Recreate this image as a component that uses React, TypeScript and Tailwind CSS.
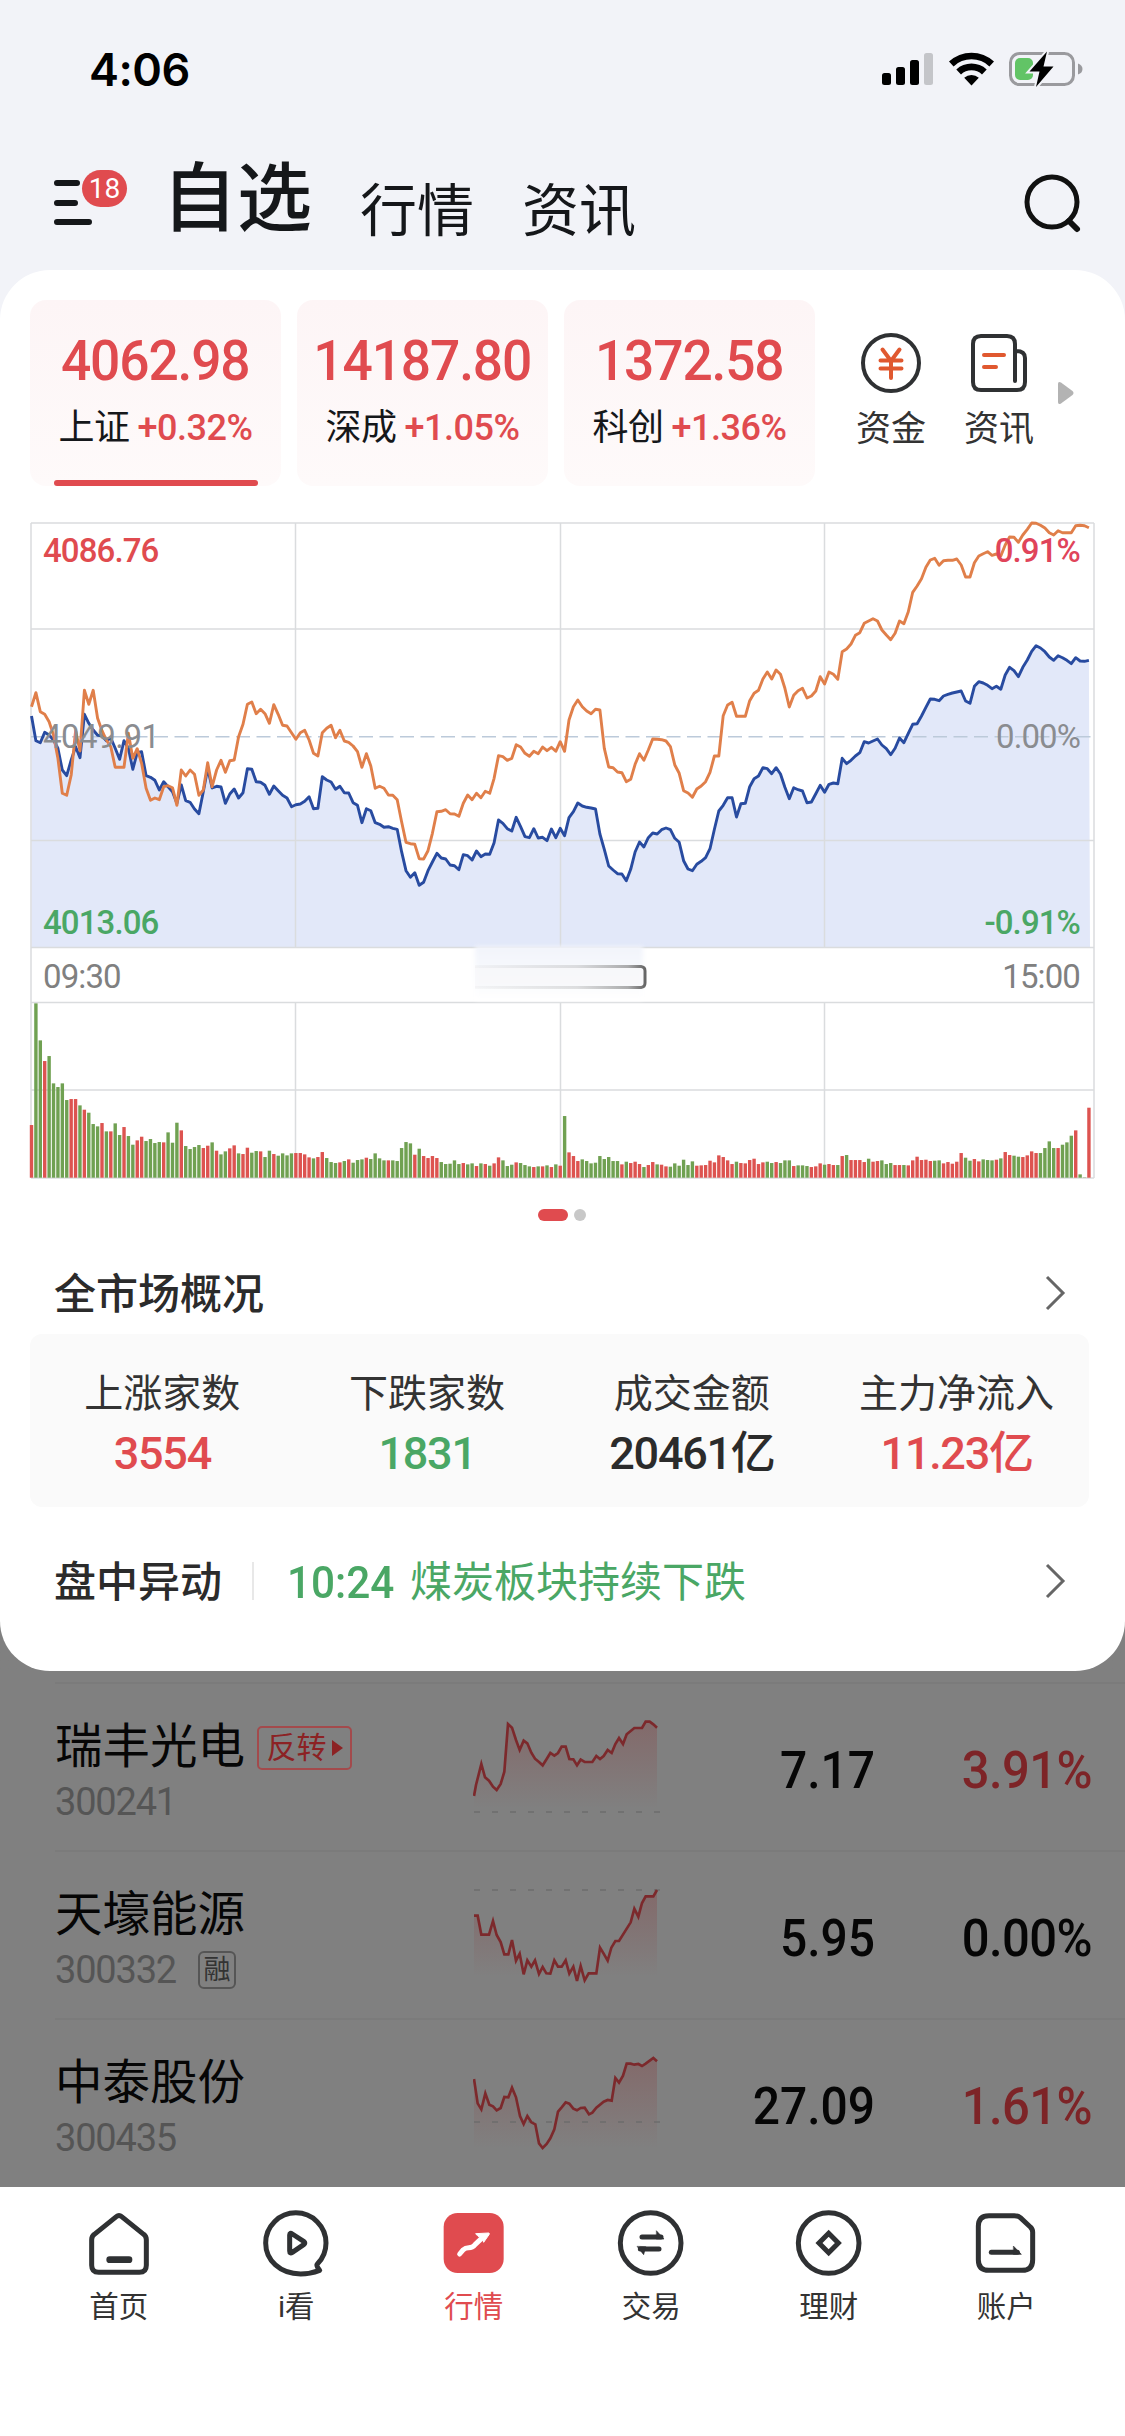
import React from "react";

const RED = "#e04b4f";

const indices = [
  { value: "4062.98", name: "上证", change: "+0.32%", active: true },
  { value: "14187.80", name: "深成", change: "+1.05%", active: false },
  { value: "1372.58", name: "科创", change: "+1.36%", active: false },
];

const overview = [
  { label: "上涨家数", value: "3554", color: "text-[#e04b4f]" },
  { label: "下跌家数", value: "1831", color: "text-[#4aa765]" },
  { label: "成交金额", value: "20461亿", color: "text-[#2b2b2b]" },
  { label: "主力净流入", value: "11.23亿", color: "text-[#e04b4f]" },
];

// one value per trading minute, 09:30 - 15:00
const leading = [
  618, 692, 698, 667, 675, 690, 715, 780, 797, 750, 710, 743, 613, 640, 660, 676, 677, 692, 684, 715,
  748, 692, 715, 778, 728, 725, 797, 802, 811, 840, 815, 830, 845, 880, 825, 872, 877, 897, 911, 845,
  775, 834, 829, 831, 880, 852, 837, 864, 848, 776, 778, 815, 817, 826, 853, 828, 842, 856, 864, 890,
  884, 882, 874, 860, 896, 895, 800, 810, 816, 838, 829, 848, 849, 878, 886, 938, 896, 902, 938, 943,
  952, 950, 955, 958, 1025, 1082, 1102, 1088, 1126, 1117, 1082, 1056, 1030, 1044, 1047, 1065, 1067, 1079, 1034, 1037,
  1050, 1023, 1040, 1032, 1033, 998, 930, 940, 956, 963, 922, 950, 980, 983, 956, 984, 982, 992, 957, 983,
  955, 977, 923, 905, 879, 888, 892, 894, 897, 972, 1018, 1068, 1080, 1091, 1092, 1112, 1078, 1026, 996, 1011,
  983, 969, 972, 959, 954, 959, 985, 997, 1052, 1077, 1082, 1063, 1054, 1043, 1016, 958, 903, 886, 863, 863,
  921, 881, 880, 830, 806, 798, 773, 776, 791, 773, 792, 832, 866, 833, 839, 843, 878, 876, 851, 826,
  847, 823, 819, 821, 745, 761, 751, 738, 728, 695, 699, 693, 687, 705, 716, 734, 715, 684, 698, 670,
  643, 641, 618, 592, 567, 568, 572, 558, 553, 549, 546, 543, 573, 580, 529, 515, 519, 526, 536, 529,
  538, 495, 472, 482, 500, 472, 450, 424, 407, 414, 425, 441, 451, 437, 443, 451, 461, 443, 453, 454,
  451,
];

const average = [
  590, 548, 605, 613, 635, 675, 745, 850, 856, 795, 662, 723, 541, 583, 541, 625, 662, 690, 710, 772,
  772, 772, 670, 745, 716, 760, 835, 871, 864, 869, 830, 827, 833, 886, 780, 798, 780, 793, 856, 840,
  758, 830, 780, 751, 787, 752, 750, 680, 643, 583, 576, 611, 598, 611, 640, 584, 613, 646, 648, 668,
  688, 668, 661, 690, 730, 738, 668, 655, 646, 683, 661, 693, 697, 708, 725, 772, 731, 768, 835, 829,
  835, 855, 856, 869, 935, 997, 1001, 1003, 1046, 1047, 1022, 970, 905, 904, 899, 911, 912, 919, 880, 855,
  869, 850, 863, 844, 850, 805, 737, 740, 751, 745, 704, 711, 730, 739, 724, 731, 711, 722, 712, 724,
  695, 724, 630, 590, 570, 590, 603, 611, 598, 600, 715, 771, 773, 786, 788, 815, 808, 763, 731, 751,
  720, 687, 688, 689, 693, 710, 765, 790, 842, 849, 862, 837, 828, 815, 787, 738, 738, 617, 585, 577,
  619, 619, 619, 572, 550, 541, 507, 486, 507, 480, 493, 535, 591, 556, 542, 535, 564, 558, 543, 500,
  522, 486, 493, 508, 425, 417, 402, 376, 368, 340, 333, 326, 333, 360, 375, 389, 370, 333, 341, 305,
  247, 228, 206, 172, 150, 145, 166, 152, 151, 151, 147, 165, 201, 201, 158, 138, 131, 125, 136, 132,
  138, 105, 81, 82, 97, 75, 58, 39, 40, 46, 54, 68, 75, 62, 68, 68, 68, 47, 46, 47,
  53,
];

// r = 涨, g = 跌, number is the top of the bar
const volume = `
r435 g70 g181 r243 g228 g310 g321 g310 g360 r357 r357 g376 r389 g398 g432 g439 r429 g454 r454 g430
g465 r441 g468 g494 r481 r470 g483 g477 g489 g486 r487 g457 g488 g428 r451 g498 g507 g501 g495 r504
r497 g487 r512 g523 g514 r505 r496 g520 r522 r503 g518 g513 r514 g531 g512 r522 g527 g520 g526 g520
r519 r519 r523 r532 g535 r531 r516 g534 g546 g549 r547 g543 r538 g548 g540 g538 r533 g537 g520 g535
g541 r541 g541 g543 g504 g486 g490 r524 g506 r528 r534 r528 r534 g546 g552 g551 g541 g552 r549 g553
g550 r558 g550 r552 g557 r550 r532 g541 g558 g554 r547 g549 g555 g559 r561 g559 r559 g556 r561 g553
r557 g408 r517 r528 r543 g538 g543 g550 g548 g528 g537 g531 g543 g543 r553 g545 r549 r545 r552 g561
r555 r546 g553 r554 r559 g560 g550 g557 g539 g555 g544 r557 r556 r555 r542 r547 r526 r531 r541 r552
g545 r549 r550 r540 r536 r552 r547 g545 g549 r546 g549 g541 g541 r558 g556 g556 g558 r561 r559 r550
g554 r552 r555 g555 r528 g525 r540 r540 r540 r546 g536 r545 r543 g541 g552 g549 r555 r555 g555 r556
r541 r530 r540 r539 r543 g542 g541 r550 r546 r551 r545 r519 g533 g542 r537 r544 g538 g540 g541 r539
g535 r516 r525 g527 g530 r531 r526 r514 r519 g519 g504 g484 g504 r504 g494 g487 g467 r451 g583 g592
r383`
  .trim()
  .split(/\s+/);

const px = (i: number) => 3.5 + i * 4.406;
const toPoints = (data: number[]) =>
  data.map((v, i) => `${px(i).toFixed(1)},${(v / 3 - 10).toFixed(1)}`).join(" ");

const stocks = [
  {
    name: "瑞丰光电",
    code: "300241",
    tag: "反转",
    margin: false,
    price: "7.17",
    change: "3.91%",
    up: true,
    top: -24,
    base: 366,
    fade: [95, 355],
    line: "102,318 108,285 124,222 135,262 147,272 159,290 170,300 182,282 193,245 204,102 216,113 228,150 239,180 251,152 262,160 274,188 285,206 297,216 308,226 320,207 331,189 343,197 354,189 365,170 377,170 388,207 400,208 411,226 422,209 434,216 457,216 469,198 480,207 491,198 503,180 515,189 526,162 537,144 549,162 560,133 583,114 606,114 617,95 629,95 640,103 651,113",
  },
  {
    name: "天壕能源",
    code: "300332",
    tag: "",
    margin: true,
    price: "5.95",
    change: "0.00%",
    up: false,
    top: 480,
    base: 600,
    fade: [600, 860],
    line: "102,677 113,677 124,734 147,734 159,693 170,735 182,756 193,793 205,793 216,750 228,812 239,791 251,853 262,811 274,830 285,811 297,852 308,831 319,850 331,851 343,811 354,830 365,830 377,811 388,851 400,830 411,873 422,828 434,871 446,850 469,850 480,773 491,791 503,812 514,773 526,753 537,753 572,697 583,656 595,680 606,639 617,619 640,619 651,600",
  },
  {
    name: "中泰股份",
    code: "300435",
    tag: "",
    margin: false,
    price: "27.09",
    change: "1.61%",
    up: true,
    top: 984,
    base: 1296,
    fade: [1104, 1375],
    line: "102,1167 113,1240 124,1258 136,1210 148,1244 159,1249 170,1261 182,1254 193,1221 205,1222 216,1193 228,1222 240,1278 251,1302 262,1278 274,1297 286,1303 297,1360 308,1374 320,1362 331,1345 343,1318 354,1265 365,1252 377,1237 388,1241 400,1256 411,1261 422,1254 434,1253 447,1273 457,1268 469,1253 491,1235 503,1230 515,1232 526,1164 537,1178 549,1157 560,1121 572,1121 583,1124 595,1122 606,1128 617,1121 640,1104 651,1114",
  },
];

function StatusBar() {
  return (
    <div className="flex h-[138px] items-center justify-between pl-[89px] pr-[42px]">
      <span className="font-['Inter'] text-[45px] font-semibold leading-none tracking-[-0.5px] text-black">
        4:06
      </span>
      <svg width="202" height="38" viewBox="0 0 202 38">
        <rect x="1" y="23" width="9" height="12" rx="2.5" fill="#000" />
        <rect x="15" y="17" width="9" height="18" rx="2.5" fill="#000" />
        <rect x="29" y="10" width="9" height="25" rx="2.5" fill="#000" />
        <rect x="43" y="3" width="9" height="32" rx="2.5" fill="#c4c5c9" />
        <path d="M68 11.500a33 33 0 0 1 45 0l-4.600 4.900a26 26 0 0 0-35.800 0z" />
        <path d="M75.300 19.500a22.500 22.500 0 0 1 30.400 0l-4.700 4.900a15.500 15.500 0 0 0-21 0z" />
        <path d="M83.200 27.800a11 11 0 0 1 14.600 0L90.500 35.500z" />
        <rect x="129.500" y="3.500" width="63" height="31" rx="9" fill="none" stroke="#9a9a9e" strokeWidth="3" />
        <path d="M197 13.500q4.500 1.500 4.500 5.500t-4.500 5.500z" fill="#9a9a9e" />
        <rect x="134" y="8" width="18" height="22" rx="5" fill="#62c466" />
        <path
          d="M166 1.500l-17.500 20h10L155 37l17.500-20.500h-10z"
          fill="#000"
          stroke="#f2f3f8"
          strokeWidth="4"
          paintOrder="stroke"
        />
      </svg>
    </div>
  );
}

function Header() {
  return (
    <div className="flex h-[132px] items-center pl-[53px] pr-[43px]">
      <div className="relative h-[52px] w-[76px]">
        <svg width="42" height="52" viewBox="0 0 42 52" stroke="#15171a" strokeWidth="6" strokeLinecap="round">
          <path d="M4 5h20M4 25h18M4 44h32" />
        </svg>
        <span className="absolute -top-[8px] left-[29px] flex h-[37px] w-[45px] items-center justify-center rounded-full bg-[#e04b4f] text-[28px] leading-none text-white">
          18
        </span>
      </div>
      <div className="ml-[33px] flex leading-none text-[#15171a]">
        <span className="mb-[9px] text-[75px] font-medium">自选</span>
        <span className="ml-[48px] mt-[21px] text-[57px]">行情</span>
        <span className="ml-[48px] mt-[21px] text-[57px]">资讯</span>
      </div>
      <svg className="ml-auto" width="60" height="60" viewBox="0 0 60 60" fill="none" stroke="#111">
        <circle cx="30" cy="28" r="25" strokeWidth="5" />
        <path d="M47 47l8 8" strokeWidth="6" strokeLinecap="round" />
      </svg>
    </div>
  );
}

function IndexCards() {
  return (
    <div className="flex h-[186px] gap-[16px] pl-[30px]">
      {indices.map((item) => (
        <div
          key={item.name}
          className="relative flex w-[251px] flex-col items-center rounded-2xl bg-linear-to-b from-[#fdf5f6] to-[#fefafa] pt-[34px] leading-none"
        >
          <span className="scale-x-[0.97] text-[55px] font-medium tracking-[-1.2px] text-[#e04b4f]">
            {item.value}
          </span>
          <span className="mt-[21px] flex items-center gap-[8px] text-[36px] tracking-[-0.5px] text-[#15171a]">
            {item.name}
            <span className="font-medium text-[#e04b4f]">{item.change}</span>
          </span>
          {item.active && <span className="absolute bottom-0 h-[6px] w-[204px] rounded-full bg-[#e04b4f]" />}
        </div>
      ))}
      <div className="ml-[21px] flex w-[78px] flex-col items-center pt-[32px] text-[35px] leading-none text-[#333]">
        <svg width="62" height="62" viewBox="0 0 62 62" fill="none" strokeLinecap="round">
          <circle cx="31" cy="31" r="28" stroke="#2f3133" strokeWidth="4" />
          <path
            d="M22.500 17.500L31 29l8.500-11.500M31 29v17M20.500 28.500h21M20.500 36.500h21"
            stroke="#e0582f"
            strokeWidth="4"
          />
        </svg>
        <span className="mt-[18px]">资金</span>
      </div>
      <div className="ml-[14px] flex w-[78px] flex-col items-center pt-[32px] text-[35px] leading-none text-[#333]">
        <svg width="62" height="62" viewBox="0 0 62 62" fill="none" strokeLinecap="round">
          <path
            d="M47 49V12q0-8-8-8H13Q5 4 5 12v38q0 8 8 8h36q8 0 8-8V26q0-7-9-7"
            stroke="#2f3133"
            strokeWidth="4"
          />
          <path d="M16 23h20M16 35h12" stroke="#e0582f" strokeWidth="4" />
        </svg>
        <span className="mt-[18px]">资讯</span>
      </div>
      <svg className="ml-[4px] mt-[81px]" width="17" height="24" viewBox="0 0 17 24">
        <path d="M0 3Q0 0 3 1.500L14.500 10q2 2 0 4L3 22.500Q0 24 0 21z" fill="#b3b3b3" />
      </svg>
    </div>
  );
}

function MinuteChart() {
  const linePoints = toPoints(leading);

  return (
    <div className="relative ml-[28px] mt-[34px] h-[662px] w-[1070px] text-[33px] leading-none tracking-[-0.9px]">
      <svg width="1070" height="662" viewBox="0 0 1070 662" fill="none">
        <polygon points={`3.5,427 ${linePoints} 1062,427`} fill="#e2e8f9" />
        <path
          d="M3 3H1066M3 109H1066M3 320.500H1066M3 427.500H1066M3 482.500H1066M3 570H1066M3 658H1066M3 3V658M1066 3V658M267.500 3V427M532.500 3V427M796.500 3V427M267.500 482.500V658M532.500 482.500V658M796.500 482.500V658"
          stroke="#dadcde"
          strokeWidth="1.500"
        />
        <path d="M3 216.700H1066" stroke="#bccada" strokeWidth="1.500" strokeDasharray="14 6.500" />
        {volume.map((bar, i) => {
          const h = (593 - Number(bar.slice(1))) / 3;
          return (
            <rect
              key={i}
              x={px(i) - 1.7}
              y={657.7 - h}
              width="3.4"
              height={h}
              fill={bar[0] === "r" ? "#dd5350" : "#70a152"}
            />
          );
        })}
        <polyline points={linePoints} stroke="#284ba0" strokeWidth="2.9" strokeLinejoin="round" />
        <polyline points={toPoints(average)} stroke="#e07f4a" strokeWidth="2.9" strokeLinejoin="round" />
      </svg>

      {/* 拖动提示条 */}
      <div className="absolute left-[447px] top-[426px] h-[54px] w-[168px] bg-linear-to-b from-[#f1f4fb] to-white blur-[2px]" />
      <svg className="absolute left-[447px] top-[443px]" width="174" height="28" viewBox="0 0 174 28">
        <defs>
          <linearGradient id="pillFade" x1="0" x2="1" y1="0" y2="0">
            <stop offset="0" stopColor="#888" stopOpacity="0.05" />
            <stop offset="0.6" stopColor="#888" stopOpacity="0.25" />
            <stop offset="0.9" stopColor="#777" stopOpacity="0.6" />
            <stop offset="1" stopColor="#666" stopOpacity="1" />
          </linearGradient>
        </defs>
        <path
          d="M0 3.500H166Q170 4 170 8V20Q170 24 166 24.500H0"
          fill="#f6f7f9"
          fillOpacity="0.6"
          stroke="url(#pillFade)"
          strokeWidth="3"
        />
      </svg>

      <span className="absolute left-[15px] top-[14px] font-medium text-[#e04b4f]">4086.76</span>
      <span className="absolute right-[18px] top-[14px] font-medium text-[#e0445a]">0.91%</span>
      <span className="absolute left-[15px] top-[200px] tracking-[-0.5px] text-[#8a8c90]">4049.91</span>
      <span className="absolute right-[18px] top-[200px] text-[#8a8c90]">0.00%</span>
      <span className="absolute left-[15px] top-[386px] font-medium text-[#4aa765]">4013.06</span>
      <span className="absolute right-[18px] top-[386px] font-medium text-[#4aa765]">-0.91%</span>
      <span className="absolute left-[15px] top-[440px] text-[#808080]">09:30</span>
      <span className="absolute right-[18px] top-[440px] text-[#808080]">15:00</span>
    </div>
  );
}

function Chevron() {
  return (
    <svg className="ml-auto" width="22" height="38" viewBox="0 0 22 38" fill="none">
      <path d="M3 3l16 16L3 35" stroke="#666" strokeWidth="3" />
    </svg>
  );
}

function MarketSheet() {
  return (
    <div className="bg-linear-to-b from-[#f2f3f8] from-50% to-[#808080] to-50%">
      <div className="h-[1401px] rounded-[50px] bg-white pt-[30px]">
        <IndexCards />
        <MinuteChart />

        <div className="mt-[27px] flex h-[12px] justify-center gap-[6px] pr-[1px]">
          <span className="w-[30px] rounded-full bg-[#e04b4f]" />
          <span className="w-[12px] rounded-full bg-[#c8c8c8]" />
        </div>

        <div className="mt-[31px] flex h-[82px] items-center pl-[54px] pr-[59px] text-[42px] font-medium leading-none text-[#2b2b2b]">
          <span className="pt-[3px]">全市场概况</span>
          <Chevron />
        </div>

        <div className="ml-[30px] grid h-[173px] w-[1059px] grid-cols-4 rounded-xl bg-[#fafafa]">
          {overview.map((item) => (
            <div key={item.label} className="flex flex-col items-center pt-[41px] leading-none">
              <span className="text-[39px] text-[#333]">{item.label}</span>
              <span className={`mt-[17px] text-[45px] font-medium tracking-[-1.3px] ${item.color}`}>{item.value}</span>
            </div>
          ))}
        </div>

        <div className="flex h-[148px] items-center pl-[54px] pr-[59px] text-[42px] leading-none">
          <span className="pt-[3px] font-medium text-[#2b2b2b]">盘中异动</span>
          <span className="ml-[30px] h-[38px] w-[2px] bg-[#e8e8e8]" />
          <span className="ml-[33px] w-[109px] origin-left scale-x-[0.94] pt-[3px] text-[45px] font-medium text-[#4aa765]">
            10:24
          </span>
          <span className="ml-[14px] pt-[3px] text-[#4aa765]">煤炭板块持续下跌</span>
          <Chevron />
        </div>
      </div>
    </div>
  );
}

function StockList() {
  return (
    <div className="h-[516px] bg-[#808080] pt-[11px]">
      {stocks.map((s) => (
        <div
          key={s.code}
          className="ml-[55px] grid h-[168px] grid-cols-[418px_190px_212px_217px] border-t-2 border-[#7b7b7b] leading-none"
        >
          <div className="pt-[39px]">
            <div className="flex h-[50px] items-center text-[47.500px] text-[#060606]">
              {s.name}
              {s.tag && (
                <span className="ml-[12px] flex h-[44px] w-[95px] items-center justify-center gap-[5px] rounded-[5px] border-2 border-[#a34a4c] text-[30px] text-[#8c2224]">
                  {s.tag}
                  <svg width="11" height="16" viewBox="0 0 11 16">
                    <path d="M0 0l11 8-11 8z" fill="#8c2224" />
                  </svg>
                </span>
              )}
            </div>
            <div className="mt-[9px] flex h-[40px] items-center text-[38px] tracking-[-1.2px] text-[#555]">
              {s.code}
              {s.margin && (
                <span className="ml-[22px] flex h-[38px] w-[38px] items-center justify-center rounded-[6px] border-2 border-[#555] text-[27px] tracking-normal text-[#333]">
                  融
                </span>
              )}
            </div>
          </div>
          <svg className="-mt-[2px]" width="190" height="168" viewBox={`99 ${s.top} 570 504`} fill="none">
            <defs>
              <linearGradient id={s.code} gradientUnits="userSpaceOnUse" x1="0" x2="0" y1={s.fade[0]} y2={s.fade[1]}>
                <stop offset="0" stopColor="#8c2224" stopOpacity="0.24" />
                <stop offset="1" stopColor="#8c2224" stopOpacity="0" />
              </linearGradient>
            </defs>
            <polygon points={`102,${s.fade[1]} ${s.line} 651,${s.fade[1]}`} fill={`url(#${s.code})`} />
            <path d={`M102 ${s.base}H662`} stroke="#6c6c6c" strokeWidth="5" strokeDasharray="18 36" />
            <polyline points={s.line} stroke="#7c292c" strokeWidth="8" />
          </svg>
          <span className="origin-right scale-x-[0.94] self-center pt-[6px] text-right text-[51px] font-medium text-[#060606]">
            {s.price}
          </span>
          <span
            className={`origin-right scale-x-[0.96] self-center pt-[6px] text-right text-[51px] font-medium tracking-[-0.6px] ${s.up ? "text-[#7d2427]" : "text-[#060606]"}`}
          >
            {s.change}
          </span>
        </div>
      ))}
    </div>
  );
}

const tabs = [
  {
    label: "首页",
    icon: (
      <>
        <path d="M100 29Q108 22 116 29L182 82Q190 88 190 98V175Q190 196 169 196H47Q26 196 26 175V98Q26 88 34 82Z" />
        <path d="M80 158H138" strokeWidth="20" />
      </>
    ),
  },
  {
    label: "i看",
    icon: (
      <>
        <path d="M179 190Q150 201 122 201C60 200 17 160 17 108A90.500 90.500 0 0 1 198 108Q198 145 172 171Q167 176 179 190Z" />
        <path d="M89 84Q89 76 97 81L131 103Q138 108 131 113L97 136Q89 141 89 132Z" />
      </>
    ),
  },
  {
    label: "行情",
    active: true,
    icon: (
      <>
        <rect x="17" y="18" width="180" height="180" rx="42" fill={RED} stroke="none" />
        <path d="M65 141L76 128Q82 122 92 122Q104 122 111 113L134 91" stroke="#fff" />
        <path d="M114 80L152 78Q156 79 153 83L137 106L133 92L121 88Z" fill="#fff" stroke="#fff" strokeWidth="3" />
      </>
    ),
  },
  {
    label: "交易",
    icon: (
      <>
        <circle cx="107" cy="108" r="91" />
        <path d="M81 90H138M76 126H132" />
        <path d="M125 72L147 96H125ZM67 119L86 143L92 120Z" fill="#2f3133" strokeWidth="2" />
      </>
    ),
  },
  {
    label: "理财",
    icon: (
      <>
        <circle cx="107" cy="108" r="91" />
        <path d="M107 79L136 108L107 137L78 108Z" strokeLinejoin="miter" />
      </>
    ),
  },
  {
    label: "账户",
    icon: (
      <>
        <path d="M57 26H133Q144 26 151 32L181 60Q188 66 188 76V158Q188 190 156 190H57Q25 190 25 158V58Q25 26 57 26Z" />
        <path d="M64 136H142" />
        <path d="M131 118L154 142H131Z" fill="#2f3133" strokeWidth="2" />
      </>
    ),
  },
];

function TabBar() {
  return (
    <div className="grid h-[249px] grid-cols-6 bg-white px-[30px] pt-[20px]">
      {tabs.map((tab) => (
        <div
          key={tab.label}
          className={`flex flex-col items-center text-[29.500px] leading-none ${tab.active ? "text-[#e04b4f]" : "text-[#333]"}`}
        >
          <svg
            width="72"
            height="72"
            viewBox="0 0 216 216"
            fill="none"
            stroke="#2f3133"
            strokeWidth="15"
            strokeLinecap="round"
            strokeLinejoin="round"
          >
            {tab.icon}
          </svg>
          <span className="mt-[14px]">{tab.label}</span>
        </div>
      ))}
    </div>
  );
}

export default function App() {
  return (
    <main className="w-[1125px] overflow-hidden bg-white font-['Roboto','Noto_Sans_CJK_SC',sans-serif]">
      <div className="bg-[#f2f3f8]">
        <StatusBar />
        <Header />
      </div>
      <MarketSheet />
      <StockList />
      <TabBar />
    </main>
  );
}
